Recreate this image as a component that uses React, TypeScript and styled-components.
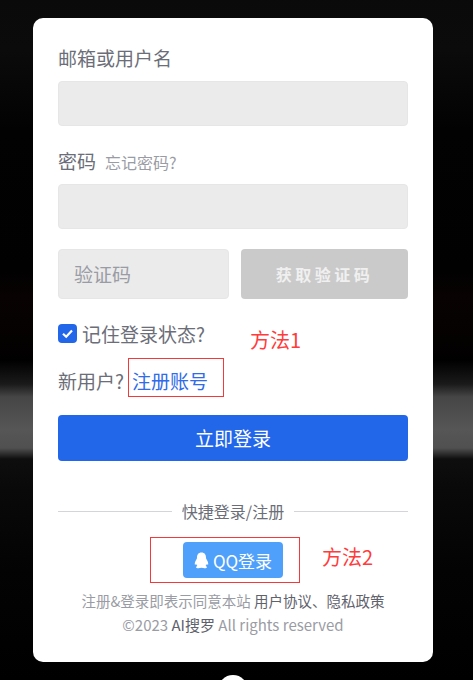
import React from "react";
import styled, { createGlobalStyle } from "styled-components";

const GlobalStyle = createGlobalStyle`
  html, body {
    margin: 0;
    padding: 0;
    height: 100%;
    overflow: hidden;
    background: #000;
  }
  body {
    font-family: "Noto Sans CJK SC", "Noto Sans", sans-serif;
  }
`;

const Page = styled.div`
  position: relative;
  box-sizing: border-box;
  width: 473px;
  height: 680px;
  padding-top: 18px;
  overflow: hidden;
  background: linear-gradient(
    to bottom,
    #0a0a0a 0,
    #0b0b0b 50px,
    #020202 130px,
    #010101 270px,
    #080202 295px,
    #070202 320px,
    #010000 360px,
    #1a1a1a 384px,
    #464646 397px,
    #565656 430px,
    #505050 448px,
    #0e0e0e 459px,
    #090909 490px,
    #030303 570px,
    #000 680px
  );
`;

const Card = styled.div`
  position: relative;
  box-sizing: border-box;
  width: 400px;
  height: 644px;
  margin-left: 33px;
  padding: 29px 25px 0;
  background: #fff;
  border-radius: 10px;
`;

const Label = styled.div`
  display: flex;
  align-items: baseline;
  gap: 9px;
  height: 22px;
  line-height: 22px;
  font-size: 19px;
  color: #6b6e78;
`;

const Hint = styled.span`
  font-size: 16px;
  color: #9a9ca5;
`;

const Field = styled.div<{ $mb?: number }>`
  box-sizing: border-box;
  height: 45px;
  margin: 12px 0 ${(p) => p.$mb ?? 0}px;
  background: #ebebeb;
  border: 1px solid #e6e6e6;
  border-radius: 4px;
`;

const CaptchaRow = styled.div`
  display: grid;
  grid-template-columns: 171px 167px;
  gap: 12px;
  margin-top: 20px;
`;

const CaptchaInput = styled.div`
  box-sizing: border-box;
  height: 50px;
  padding-left: 15px;
  line-height: 48px;
  font-size: 19px;
  color: #9a9ca5;
  background: #ebebeb;
  border: 1px solid #e6e6e6;
  border-radius: 4px;
`;

const CaptchaButton = styled.div`
  height: 50px;
  line-height: 50px;
  text-align: center;
  font-size: 16px;
  font-weight: 700;
  letter-spacing: 3.5px;
  color: #f0f0f0;
  background: #cacaca;
  border-radius: 4px;
`;

const Remember = styled.div`
  display: flex;
  align-items: center;
  gap: 5px;
  height: 24px;
  margin-top: 22px;
  font-size: 19px;
  color: #6b6e78;
`;

const Check = styled.span`
  display: flex;
  align-items: center;
  justify-content: center;
  width: 19px;
  height: 19px;
  background: #2266ea;
  border-radius: 4px;
`;

const NewUser = styled.div`
  height: 26px;
  line-height: 26px;
  margin-top: 23px;
  font-size: 19px;
  color: #6b6e78;
`;

const RegisterLink = styled.a`
  margin-left: 8px;
  color: #2f6bea;
`;

const Submit = styled.div`
  height: 46px;
  margin-top: 21px;
  line-height: 45px;
  text-align: center;
  font-size: 19px;
  color: #fff;
  background: #2266ea;
  border-radius: 4px;
`;

const Divider = styled.div`
  display: flex;
  align-items: center;
  gap: 10px;
  height: 20px;
  margin-top: 40px;
  font-size: 16px;
  color: #6b6e78;
  &::before,
  &::after {
    content: "";
    flex: 1;
    height: 1px;
    background: #d4d5d9;
  }
`;

const QqRow = styled.div`
  display: flex;
  justify-content: center;
  margin-top: 21px;
`;

const QqButton = styled.div`
  display: flex;
  align-items: center;
  justify-content: center;
  gap: 4px;
  width: 100px;
  height: 36px;
  font-size: 17px;
  color: #fff;
  background: #4fa0fb;
  border-radius: 4px;
`;

const Terms = styled.div`
  margin-top: 12px;
  height: 22px;
  line-height: 22px;
  text-align: center;
  font-size: 14.5px;
  color: #9a9ca5;
  white-space: nowrap;
`;

const Copyright = styled(Terms)`
  margin-top: 2px;
  font-size: 15px;
`;

const Dark = styled.span`
  color: #5f626c;
`;

const RedBox = styled.div<{ $x: number; $y: number; $w: number; $h: number }>`
  position: absolute;
  box-sizing: border-box;
  left: ${(p) => p.$x}px;
  top: ${(p) => p.$y}px;
  width: ${(p) => p.$w}px;
  height: ${(p) => p.$h}px;
  border: 1px solid #f23a3a;
`;

const Note = styled.div<{ $x: number; $y: number }>`
  position: absolute;
  left: ${(p) => p.$x}px;
  top: ${(p) => p.$y}px;
  font-size: 20px;
  line-height: 26px;
  color: #ff3b3b;
`;

const BottomDot = styled.div`
  position: absolute;
  left: 218px;
  top: 675px;
  width: 30px;
  height: 30px;
  background: #fff;
  border-radius: 50%;
`;

const App = () => {
  return (
    <>
      <GlobalStyle />
      <Page>
        <Card>
          <Label>邮箱或用户名</Label>
          <Field $mb={24} />
          <Label>
            密码<Hint>忘记密码?</Hint>
          </Label>
          <Field />
          <CaptchaRow>
            <CaptchaInput>验证码</CaptchaInput>
            <CaptchaButton>获取验证码</CaptchaButton>
          </CaptchaRow>
          <Remember>
            <Check>
              <svg width="13" height="13" viewBox="0 0 13 13">
                <path
                  d="M2 6.8 L5.2 9.8 L11 3.6"
                  fill="none"
                  stroke="#fff"
                  strokeWidth="2.2"
                />
              </svg>
            </Check>
            记住登录状态?
          </Remember>
          <NewUser>
            新用户?<RegisterLink>注册账号</RegisterLink>
          </NewUser>
          <Submit>立即登录</Submit>
          <Divider>快捷登录/注册</Divider>
          <QqRow>
            <QqButton>
              <svg width="15" height="17" viewBox="0 0 15 17">
                <path
                  d="M7.5 0.5 C4.4 0.5 3 2.8 3 5.4 C3 6.2 2.9 6.6 2.5 7.2 C1.5 8.7 0.6 10.6 0.8 12.2 C0.9 13 1.4 13 2.1 12 C2.4 12.8 2.8 13.4 3.4 13.9 C2.4 14.3 1.9 14.8 2.1 15.4 C2.4 16.2 4.5 16.4 7.5 15.8 C10.5 16.4 12.6 16.2 12.9 15.4 C13.1 14.8 12.6 14.3 11.6 13.9 C12.2 13.4 12.6 12.8 12.9 12 C13.6 13 14.1 13 14.2 12.2 C14.4 10.6 13.5 8.7 12.5 7.2 C12.1 6.6 12 6.2 12 5.4 C12 2.8 10.6 0.5 7.5 0.5 Z"
                  fill="#fff"
                />
              </svg>
              QQ登录
            </QqButton>
          </QqRow>
          <Terms>
            注册&登录即表示同意本站 <Dark>用户协议、隐私政策</Dark>
          </Terms>
          <Copyright>
            ©2023 <Dark>AI搜罗</Dark> All rights reserved
          </Copyright>
        </Card>
        <RedBox $x={128} $y={358} $w={96} $h={39} />
        <RedBox $x={150} $y={537} $w={150} $h={46} />
        <Note $x={250} $y={327}>方法1</Note>
        <Note $x={322} $y={544}>方法2</Note>
        <BottomDot />
      </Page>
    </>
  );
};

export default App;
